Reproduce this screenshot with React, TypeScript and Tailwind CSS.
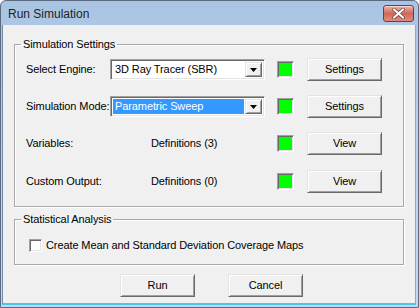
const raised =
  "bg-[#f0f0f0] border border-t-[#e3e3e3] border-l-[#e3e3e3] border-r-[#696969] border-b-[#696969] shadow-[inset_1px_1px_0_#ffffff,inset_-1px_-1px_0_#a0a0a0]";
const sunken =
  "border border-t-[#a0a0a0] border-l-[#a0a0a0] border-r-white border-b-white shadow-[inset_1px_1px_0_#696969,inset_-1px_-1px_0_#e3e3e3]";

function Combo({ value, selected }: { value: string; selected?: boolean }) {
  return (
    <div className={`w-[155px] h-[21px] bg-white flex items-stretch p-[2px] ${sunken}`}>
      <div className="flex-1 flex items-center pr-[1px]">
        <div
          className={`h-full w-full flex items-center pl-[2px] whitespace-nowrap ${
            selected ? "bg-[#3399ff] text-white" : "text-black"
          }`}
        >
          {value}
        </div>
      </div>
      <div className={`w-[17px] flex items-center justify-center ${raised}`}>
        <svg width="7" height="4" viewBox="0 0 7 4">
          <path d="M0 0H7L3.5 4Z" fill="#000" />
        </svg>
      </div>
    </div>
  );
}

function Green() {
  return <div className={`w-[17px] h-[17px] bg-[#00ff00] ${sunken}`} />;
}

function Btn({ label }: { label: string }) {
  return (
    <div className={`w-[75px] h-[23px] flex items-center justify-center text-black ${raised}`}>
      {label}
    </div>
  );
}

function Row({
  label,
  button,
  children,
  mt,
}: {
  label: string;
  button: string;
  children: React.ReactNode;
  mt: string;
}) {
  return (
    <div className={`flex items-center h-[23px] ${mt}`}>
      <div className="w-[84px] shrink-0 whitespace-nowrap">{label}</div>
      <div className="w-[155px] shrink-0 flex items-center whitespace-nowrap">{children}</div>
      <div className="ml-[12px]">
        <Green />
      </div>
      <div className="ml-[13px]">
        <Btn label={button} />
      </div>
    </div>
  );
}

export default function App() {
  return (
    <div className="w-[419px] h-[308px] [font-family:'Liberation_Sans',Arial,sans-serif] text-[11px] tracking-[-0.1px] text-black">
      <div className="w-full h-full rounded-t-[6px] border border-[#5a6b80] bg-gradient-to-b from-[#a9c4e2] via-[#bcd3ec] to-[#c3d9ef] flex flex-col">
        <div className="h-[24px] flex items-center justify-between pl-[7px] pr-[4px]">
          <div className="text-[12px] tracking-normal text-[#1e1e1e] pt-[1px]">Run Simulation</div>
          <div className="w-[31px] h-[17px] rounded-[3px] border border-[#7a3a33] bg-gradient-to-b from-[#eab3aa] via-[#d0685a] to-[#de8d7f] flex items-center justify-center shadow-[inset_0_1px_0_rgba(255,255,255,0.5)]">
            <svg width="13" height="11" viewBox="0 0 13 11">
              <path d="M2 1.5L11 9.5M11 1.5L2 9.5" stroke="#6a3a34" strokeWidth="3.6" strokeLinecap="round" />
              <path d="M2 1.5L11 9.5M11 1.5L2 9.5" stroke="#ffffff" strokeWidth="2.2" strokeLinecap="round" />
            </svg>
          </div>
        </div>
        <div className="flex-1 ml-[1px] mr-[2px] mb-[2px] bg-[#f0f0f0] border-l border-l-[#6f8bab] border-r border-r-[#8fa8c4] border-b-[2px] border-b-[#4cc4ee] flex flex-col px-[11px] pt-[13px]">
          <fieldset className="border border-[#a8a8a8] pl-[11px] pb-[13px] shadow-[1px_1px_0_#ffffff,inset_1px_1px_0_#ffffff]">
            <legend className="-ml-[5px] px-[2px] leading-[13px]">Simulation Settings</legend>
            <Row label="Select Engine:" button="Settings" mt="mt-[7px]">
              <Combo value="3D Ray Tracer (SBR)" />
            </Row>
            <Row label="Simulation Mode:" button="Settings" mt="mt-[14px]">
              <Combo value="Parametric Sweep" selected />
            </Row>
            <Row label="Variables:" button="View" mt="mt-[14px]">
              <span className="ml-[41px]">Definitions (3)</span>
            </Row>
            <Row label="Custom Output:" button="View" mt="mt-[15px]">
              <span className="ml-[41px]">Definitions (0)</span>
            </Row>
          </fieldset>
          <fieldset className="mt-[6px] border border-[#a8a8a8] pl-[14px] pb-[12px] shadow-[1px_1px_0_#ffffff,inset_1px_1px_0_#ffffff]">
            <legend className="-ml-[8px] px-[2px] leading-[13px]">Statistical Analysis</legend>
            <div className="mt-[13px] flex items-center h-[13px]">
              <div className={`w-[13px] h-[13px] bg-white ${sunken}`} />
              <span className="ml-[4px]">Create Mean and Standard Deviation Coverage Maps</span>
            </div>
          </fieldset>
          <div className="mt-[9px] flex justify-center gap-[33px] pl-[5px]">
            <Btn label="Run" />
            <Btn label="Cancel" />
          </div>
        </div>
      </div>
    </div>
  );
}
